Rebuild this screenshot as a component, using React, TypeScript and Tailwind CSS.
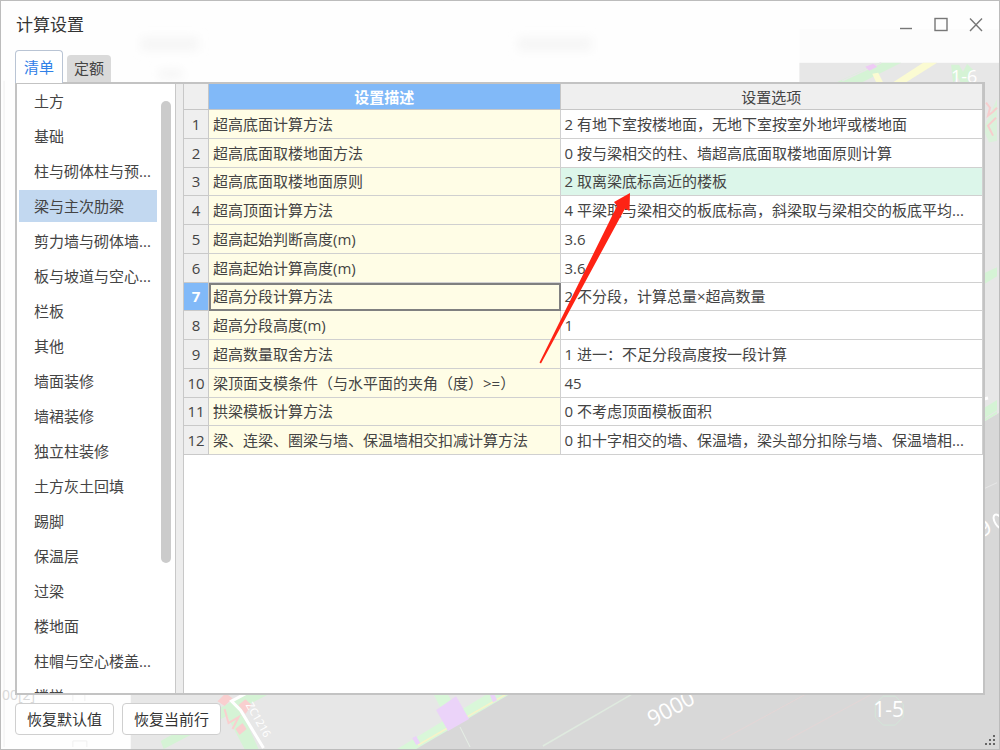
import { useState } from 'react'

const categories = [
  '土方',
  '基础',
  '柱与砌体柱与预...',
  '梁与主次肋梁',
  '剪力墙与砌体墙...',
  '板与坡道与空心...',
  '栏板',
  '其他',
  '墙面装修',
  '墙裙装修',
  '独立柱装修',
  '土方灰土回填',
  '踢脚',
  '保温层',
  '过梁',
  '楼地面',
  '柱帽与空心楼盖...',
  '楼梯',
]

interface Setting {
  name: string
  option: string
}

const settings: Setting[] = [
  { name: '超高底面计算方法', option: '2 有地下室按楼地面，无地下室按室外地坪或楼地面' },
  { name: '超高底面取楼地面方法', option: '0 按与梁相交的柱、墙超高底面取楼地面原则计算' },
  { name: '超高底面取楼地面原则', option: '2 取离梁底标高近的楼板' },
  { name: '超高顶面计算方法', option: '4 平梁取与梁相交的板底标高，斜梁取与梁相交的板底平均...' },
  { name: '超高起始判断高度(m)', option: '3.6' },
  { name: '超高起始计算高度(m)', option: '3.6' },
  { name: '超高分段计算方法', option: '2 不分段，计算总量×超高数量' },
  { name: '超高分段高度(m)', option: '1' },
  { name: '超高数量取舍方法', option: '1 进一：不足分段高度按一段计算' },
  { name: '梁顶面支模条件（与水平面的夹角（度）>=）', option: '45' },
  { name: '拱梁模板计算方法', option: '0 不考虑顶面模板面积' },
  { name: '梁、连梁、圈梁与墙、保温墙相交扣减计算方法', option: '0 扣十字相交的墙、保温墙，梁头部分扣除与墙、保温墙相...' },
]

// Faded drawing that shows through the translucent window frame
function DrawingBackdrop() {
  return (
    <svg
      className="absolute inset-0 h-full w-full"
      viewBox="0 0 1000 750"
      preserveAspectRatio="none"
      fontFamily="'Open Sans', sans-serif"
      aria-hidden="true"
    >
      <defs>
        <filter id="smudge" x="-30%" y="-80%" width="160%" height="260%">
          <feGaussianBlur stdDeviation="5" />
        </filter>
      </defs>
      <rect width="1000" height="750" fill="#fefefe" />
      <g fill="#f6f6f6" filter="url(#smudge)">
        <rect x="140" y="36" width="58" height="14" />
        <rect x="518" y="36" width="74" height="14" />
        <rect x="158" y="68" width="24" height="10" />
      </g>
      <rect x="800" y="28" width="200" height="34" fill="#fcfcfc" />
      <rect x="800" y="62" width="200" height="688" fill="#e7e7e7" />
      <rect x="130" y="690" width="870" height="60" fill="#e7e7e7" />
      <path d="M411 750 L1000 413 V750 Z" fill="#d8d8d8" />

      {/* top right */}
      <path d="M832 84 L880 62 H902 L858 84 Z" fill="#d5f3d5" />
      <path d="M843 80 L882 62" stroke="#e7e7e7" strokeWidth="1.5" />
      <path d="M866 66 l8 -3 l4 3 l-8 4 Z" fill="#eecbf5" />
      <path d="M873 73 l6 -1 l6 12 h-7 Z" fill="#fbfbd2" />
      <path d="M890 84 L924 62 H938 L903 84 Z" fill="#fbfbd2" />
      <path d="M952 64 l8 0 l4 7 l4 -8 l6 6 l-6 8 l3 7 h-8 l-4 -7 l-5 5 Z" fill="#d5f3d5" />
      <text x="952" y="82" fontSize="18" fill="#fff">1-6</text>

      {/* right edge */}
      <path d="M984 128 L990 116 L998 98 V140 L990 142 Z" fill="#dbf1db" />
      <path d="M987 102 l4 5 l-2 8 l5 -4 l4 -4 M997 117 l-8 8 l5 10" stroke="#f7cdcd" strokeWidth="2" fill="none" />
      <path d="M985 273 L998 267 V276 L985 284 Z" fill="#d5f3d5" />
      <path d="M985 408 L998 400 V414 L985 422 Z" fill="#d5f3d5" />
      <path d="M985 419 L998 411" stroke="#e7e7e7" />
      <path d="M985 399 l4 -1" stroke="#fff" strokeWidth="3" />
      <path d="M985 489 L998 483" stroke="#e6e6e6" />
      <text x="984" y="538" fontSize="22" fill="#fff" transform="rotate(-32 984 538)">9</text>
      <ellipse cx="1000" cy="522" rx="4" ry="8" fill="none" stroke="#fff" strokeWidth="2" transform="rotate(-32 1000 522)" />

      {/* bottom left */}
      <g stroke="#f0f0f0" fill="none">
        <path d="M3 80 V748 M72 690 V702 M84 690 V702 M72 748 V742 H86 V748" />
        <path d="M15 690 H38" />
      </g>
      <text x="1" y="701" fontSize="14" fill="#d9d9d9">00[2]</text>
      <path d="M163 750 L272 693 H248 L160 742 Z" fill="#d5f3d5" />
      <path d="M226 716 l14 -6 l18 40 h-14 Z" fill="#d5f3d5" />
      <path d="M217 702 l8 -8 l7 5 l-8 8 Z M238 706 l7 -6 l6 6 l-6 9 Z M235 730 l7 -6 l4 6 l-7 6 Z" fill="#f9cfcf" />
      <path d="M224 710 l4 14 l10 -6 l-6 12" stroke="#f9cfcf" strokeWidth="2" fill="none" />
      <path d="M246 694 L231 702 L240 711 L263 749" stroke="#fff" strokeWidth="3" fill="none" />
      <text x="245" y="706" fontSize="11" fill="#fff" transform="rotate(60 245 706)">ZC1216</text>

      {/* bottom centre */}
      <path d="M397 750 L490 693 H513 L416 750 Z" fill="#d9f7d9" />
      <path d="M418 746 L508 694" stroke="#f8f3c8" strokeWidth="1.5" />
      <path d="M433 694 h14 l6 10 l-13 4 Z" fill="#d9f7d9" />
      <path d="M436 711 l20 -14 l13 23 l-21 12 Z" fill="#ebd3f9" />
      <path d="M412 739 l4 -2 l4 7 l-4 2 Z M490 696 l4 -2 l3 7 l-4 2 Z" fill="#ebd3f9" />
      <path d="M460 728 L470 748" stroke="#e6efe6" />
      <path d="M543 747 L634 694" stroke="#dfeadf" strokeWidth="1.5" />

      {/* bottom right */}
      <path d="M722 741 L812 692 M788 741 L878 692" stroke="#e4d6d6" />
      <text x="653" y="728" fontSize="22" fill="#fff" transform="rotate(-29 653 728)">9000</text>
      <path d="M884 697 h12 l8 8 v13 l-8 8 h-12 l-8 -8 v-13 Z" fill="none" stroke="#d3e6d9" />
      <text x="874" y="718" fontSize="21" fill="#fff">1-5</text>
    </svg>
  )
}

function PointerArrow() {
  return (
    <svg className="pointer-events-none absolute top-[192px] left-[538px]" width="92" height="171" viewBox="539 193 92 171" aria-hidden="true">
      <path d="M630 193 L614 202 L617 206 L539.5 362.5 L541 363.5 L625 208.500 L629.500 211 Z" fill="#fe2314" />
    </svg>
  )
}

export default function App() {
  const [tab, setTab] = useState('清单')
  const [category, setCategory] = useState('梁与主次肋梁')
  const [activeRow, setActiveRow] = useState(6)

  return (
    <div className="relative flex h-screen flex-col overflow-hidden border border-[#bcbcbc] font-['Open_Sans','Noto_Sans_CJK_SC',sans-serif] text-[15px] leading-5 text-[#444]">
      <DrawingBackdrop />

      {/* Title bar */}
      <header className="relative flex h-[49px] shrink-0 items-start justify-between px-[15px] pt-3">
        <h1 className="text-[17px] leading-6 text-[#333]">计算设置</h1>
        <div className="flex gap-[19px] pt-1 text-[#777]">
          <button aria-label="最小化">
            <svg width="16" height="16" viewBox="0 0 16 16" fill="none" stroke="currentColor" strokeWidth="1.4">
              <path d="M2 11.500 H14" />
            </svg>
          </button>
          <button aria-label="最大化">
            <svg width="16" height="16" viewBox="0 0 16 16" fill="none" stroke="currentColor" strokeWidth="1.4">
              <rect x="2" y="1.500" width="12" height="12" />
            </svg>
          </button>
          <button aria-label="关闭">
            <svg width="16" height="16" viewBox="0 0 16 16" fill="none" stroke="currentColor" strokeWidth="1.4">
              <path d="M2 1.500 L14 14 M14 1.500 L2 14" />
            </svg>
          </button>
        </div>
      </header>

      {/* Tabs */}
      <div role="tablist" className="relative z-10 flex shrink-0 items-end gap-1 pl-[14px]">
        {['清单', '定额'].map((name) => (
          <button
            key={name}
            role="tab"
            aria-selected={tab === name}
            onClick={() => setTab(name)}
            className={
              tab === name
                ? '-mb-px h-[33px] rounded-t border border-b-0 border-[#b9c4d4] bg-white px-2 text-[#2f80e7]'
                : 'h-[27px] rounded-t bg-[#dadada] px-[7px] pb-0.5'
            }
          >
            {name}
          </button>
        ))}
      </div>

      {/* Panel */}
      <main className="relative mr-[14px] ml-[14px] flex min-h-0 flex-1 border-2 border-[#c3c3c3] bg-white">
        <nav className="flex w-[159px] shrink-0 border-r border-[#c8c8c8] pl-[2px]">
          <ul className="flex min-w-0 flex-1 flex-col gap-[3px] overflow-hidden pt-px">
            {categories.map((name) => (
              <li key={name}>
                <button
                  onClick={() => setCategory(name)}
                  className={`h-8 w-full pl-[15px] text-left whitespace-nowrap ${category === name ? 'bg-[#c2d8f0]' : ''}`}
                >
                  {name}
                </button>
              </li>
            ))}
          </ul>
          <div className="mr-1 ml-1 w-[10px] shrink-0 pt-[17px]">
            <div className="h-[78%] rounded-full bg-[#cbcbcb]" />
          </div>
        </nav>
        <div className="w-2 shrink-0 border-r border-[#c8c8c8] bg-[#ededed]" />

        <div className="min-w-0 flex-1">
          <table className="h-[371px] w-full table-fixed border-separate border-spacing-0">
            <thead>
              <tr>
                <th className="h-[26px] w-[25px] border-r border-b border-[#c6c6c6] bg-[#efefef] p-0" />
                <th scope="col" className="w-[44%] border-r border-b border-[#c6c6c6] bg-[#81b9f8] p-0 font-bold text-white">
                  设置描述
                </th>
                <th scope="col" className="border-r border-b border-[#c6c6c6] bg-[#efefef] p-0 font-normal">
                  设置选项
                </th>
              </tr>
            </thead>
            <tbody>
              {settings.map((row, i) => (
                <tr key={row.name} onClick={() => setActiveRow(i)}>
                  <th
                    scope="row"
                    className={`border-r border-b border-[#c9c9c9] p-0 ${
                      activeRow === i ? 'bg-[#81b9f8] font-bold text-white' : 'bg-[#efefef] font-normal'
                    }`}
                  >
                    {i + 1}
                  </th>
                  <td
                    className={`truncate border-r border-b border-[#d0d0d0] bg-[#fffde6] py-0 pr-0 pl-1 ${
                      activeRow === i ? 'outline-2 -outline-offset-2 outline-[#808080]' : ''
                    }`}
                  >
                    {row.name}
                  </td>
                  <td className={`truncate border-r border-b border-[#d0d0d0] py-0 pr-0 pl-1 ${i === 2 ? 'bg-[#dcf6ea]' : 'bg-white'}`}>
                    {row.option}
                  </td>
                </tr>
              ))}
            </tbody>
          </table>
        </div>
      </main>

      {/* Footer */}
      <footer className="relative flex shrink-0 gap-2 px-[14px] pt-2 pb-[14px]">
        <button className="h-8 rounded border border-[#cfcfcf] bg-white px-[11px] text-[#333]">恢复默认值</button>
        <button className="h-8 rounded border border-[#cfcfcf] bg-white px-[11px] text-[#333]">恢复当前行</button>
        <svg className="absolute right-[3px] bottom-[3px]" width="11" height="11" viewBox="0 0 11 11" fill="#666" aria-hidden="true">
          <path d="M8 0 h2 v2 h-2 Z M4 4 h2 v2 h-2 Z M8 4 h2 v2 h-2 Z M0 8 h2 v2 h-2 Z M4 8 h2 v2 h-2 Z M8 8 h2 v2 h-2 Z" />
        </svg>
      </footer>

      <PointerArrow />
    </div>
  )
}
